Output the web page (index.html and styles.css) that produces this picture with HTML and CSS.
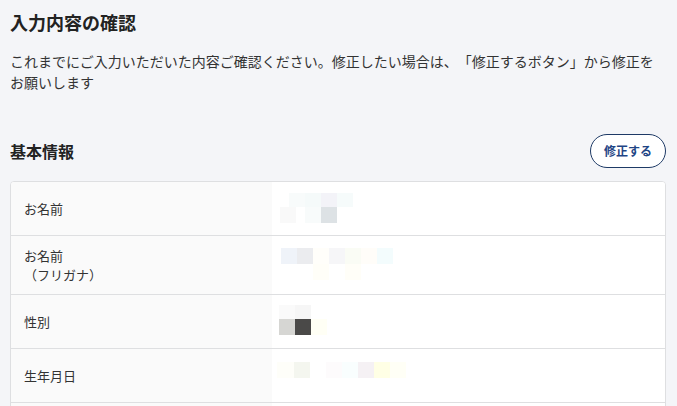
FILE: index.html
```html
<!DOCTYPE html>
<html lang="ja">
<head>
<meta charset="utf-8">
<title>入力内容の確認</title>
<link rel="stylesheet" href="styles.css">
</head>
<body>
<main class="page">
  <h1 class="title">入力内容の確認</h1>
  <p class="lead">これまでにご入力いただいた内容ご確認ください。修正したい場合は、「修正するボタン」から修正をお願いします</p>

  <section class="section">
    <div class="section-head">
      <h2 class="section-title">基本情報</h2>
      <button class="edit-btn" type="button">修正する</button>
    </div>
    <div class="table">
      <div class="row">
        <div class="label">お名前</div>
        <div class="value">
          <svg class="mosaic" width="120" height="53" viewBox="0 0 120 53">
            <rect x="8" y="25" width="16" height="16" fill="#f9f9f9"/>
            <rect x="17" y="11" width="16" height="14" fill="#f8fbfb"/>
            <rect x="33" y="11" width="16" height="14" fill="#f5fafa"/>
            <rect x="33" y="25" width="16" height="16" fill="#f8fbfb"/>
            <rect x="49" y="11" width="16" height="14" fill="#f3f3f8"/>
            <rect x="49" y="25" width="16" height="16" fill="#dde2e5"/>
            <rect x="65" y="11" width="16" height="14" fill="#f6fbfb"/>
          </svg>
        </div>
      </div>
      <div class="row">
        <div class="label">お名前<br>（フリガナ）</div>
        <div class="value">
          <svg class="mosaic" width="140" height="58" viewBox="0 0 140 58">
            <rect x="9" y="12" width="16" height="16" fill="#eff3f9"/>
            <rect x="25" y="12" width="16" height="16" fill="#ebecef"/>
            <rect x="41" y="12" width="16" height="16" fill="#fffefa"/>
            <rect x="41" y="28" width="16" height="16" fill="#fffef8"/>
            <rect x="57" y="12" width="16" height="16" fill="#f6f6f8"/>
            <rect x="73" y="12" width="16" height="16" fill="#fafcf5"/>
            <rect x="73" y="28" width="16" height="16" fill="#fffef8"/>
            <rect x="89" y="12" width="16" height="16" fill="#fffdf9"/>
            <rect x="105" y="12" width="16" height="16" fill="#f3fcfd"/>
          </svg>
        </div>
      </div>
      <div class="row">
        <div class="label">性別</div>
        <div class="value">
          <svg class="mosaic" width="120" height="53" viewBox="0 0 120 53">
            <rect x="7" y="10" width="16" height="14" fill="#fafafa"/>
            <rect x="23" y="10" width="16" height="14" fill="#f6f6f6"/>
            <rect x="7" y="24" width="16" height="16" fill="#d6d6d3"/>
            <rect x="23" y="24" width="16" height="16" fill="#4a4948"/>
            <rect x="39" y="24" width="16" height="16" fill="#fffff5"/>
          </svg>
        </div>
      </div>
      <div class="row">
        <div class="label">生年月日</div>
        <div class="value">
          <svg class="mosaic" width="150" height="53" viewBox="0 0 150 53">
            <rect x="5" y="13" width="17" height="16" fill="#fefef9"/>
            <rect x="22" y="13" width="16" height="16" fill="#f4f6ef"/>
            <rect x="54" y="13" width="16" height="16" fill="#fdfbfc"/>
            <rect x="70" y="13" width="16" height="16" fill="#f9fefe"/>
            <rect x="86" y="13" width="16" height="16" fill="#f5f1f4"/>
            <rect x="102" y="13" width="16" height="16" fill="#ffffe5"/>
            <rect x="118" y="13" width="16" height="16" fill="#fffff6"/>
          </svg>
        </div>
      </div>
      <div class="row">
        <div class="label"></div>
        <div class="value"></div>
      </div>
    </div>
  </section>
</main>
</body>
</html>
```

FILE: styles.css
```css
* {
  box-sizing: border-box;
}

html, body {
  margin: 0;
  padding: 0;
  background: #f4f5f8;
}

body {
  font-family: "Noto Sans CJK JP", "Noto Sans", sans-serif;
  color: #333;
  text-spacing-trim: space-all;
}

.page {
  padding: 9px 11px 0 10px;
}

.title {
  margin: 0;
  font-size: 18px;
  line-height: 26px;
  font-weight: 700;
  color: #222;
}

.lead {
  margin: 16px 0 0;
  font-size: 14px;
  line-height: 21px;
  color: #333;
}

.section {
  margin-top: 41px;
}

.section-head {
  display: flex;
  align-items: center;
  justify-content: space-between;
}

.section-title {
  margin: 0;
  font-size: 16px;
  line-height: 24px;
  font-weight: 700;
  color: #222;
}

.edit-btn {
  width: 76px;
  height: 34px;
  border: 1.5px solid #1e3a66;
  border-radius: 17px;
  background: #fff;
  color: #1f4585;
  font-family: inherit;
  font-size: 12px;
  font-weight: 700;
  padding: 0;
  line-height: 1;
}

.table {
  margin-top: 13px;
  border: 1px solid #dedfe1;
  border-radius: 4px;
  background: #fff;
  overflow: hidden;
}

.row {
  display: grid;
  grid-template-columns: 261px 1fr;
  min-height: 53px;
  border-bottom: 1px solid #dedfe1;
}

.label {
  background: #fafafa;
  padding: 10px 13px;
  font-size: 13px;
  line-height: 19px;
  color: #333;
  display: flex;
  align-items: center;
}

.value {
  background: #fff;
}

.mosaic {
  display: block;
}
```
